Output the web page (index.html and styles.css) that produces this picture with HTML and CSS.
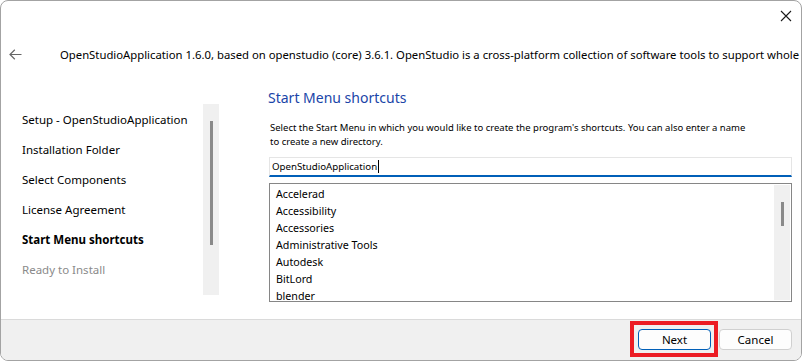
FILE: index.html
```html
<!DOCTYPE html>
<html>
<head>
<meta charset="utf-8">
<link rel="stylesheet" href="styles.css">
</head>
<body>
<div class="window">
  <div class="titlebar">
    <svg class="close" width="12" height="12" viewBox="0 0 12 12"><path d="M1 1 L11 11 M11 1 L1 11" stroke="#1a1a1a" stroke-width="1.1" fill="none"/></svg>
  </div>
  <div class="header">
    <svg class="back" width="13" height="11" viewBox="0 0 13 11"><path d="M12.5 5.5 H1.2 M5.8 0.8 L1 5.5 L5.8 10.2" stroke="#666" stroke-width="1.2" fill="none"/></svg>
    <div class="header-text">OpenStudioApplication 1.6.0, based on openstudio (core) 3.6.1. OpenStudio is a cross-platform collection of software tools to support whole building energy modeling</div>
  </div>
  <div class="main">
    <div class="sidebar">
      <ul class="steps">
        <li>Setup - OpenStudioApplication</li>
        <li>Installation Folder</li>
        <li>Select Components</li>
        <li>License Agreement</li>
        <li class="current">Start Menu shortcuts</li>
        <li class="pending">Ready to Install</li>
      </ul>
      <div class="vscroll side-scroll"><div class="thumb side-thumb"></div></div>
    </div>
    <div class="content">
      <h1 class="title">Start Menu shortcuts</h1>
      <p class="desc">Select the Start Menu in which you would like to create the program's shortcuts. You can also enter a name<br>to create a new directory.</p>
      <div class="input"><span>OpenStudioApplication</span><span class="caret"></span></div>
      <div class="listbox">
        <ul class="items">
          <li>Accelerad</li>
          <li>Accessibility</li>
          <li>Accessories</li>
          <li>Administrative Tools</li>
          <li>Autodesk</li>
          <li>BitLord</li>
          <li>blender</li>
        </ul>
        <div class="vscroll list-scroll"><div class="thumb list-thumb"></div></div>
      </div>
    </div>
  </div>
  <div class="footer">
    <span class="highlight"><button class="btn btn-next">Next</button></span>
    <button class="btn btn-cancel">Cancel</button>
  </div>
</div>
</body>
</html>
```
FILE: styles.css
```css
* { box-sizing: border-box; }
html, body { margin: 0; padding: 0; background: #ffffff; }
body {
  font-family: "Noto Sans", "Open Sans", sans-serif;
  font-size: 11.5px;
  color: #000;
}
.window {
  width: 802px;
  height: 361px;
  border: 1px solid #a3a3a3;
  border-radius: 8px;
  overflow: hidden;
  display: flex;
  flex-direction: column;
  background: #fff;
}
.titlebar {
  height: 29px;
  flex: none;
  display: flex;
  justify-content: flex-end;
  align-items: center;
  padding-right: 9px;
}
.close { display: block; }
.header {
  height: 48px;
  flex: none;
  display: flex;
  align-items: center;
  padding-left: 8px;
  white-space: nowrap;
  overflow: hidden;
  font-size: 11.3px;
}
.back { flex: none; margin-right: 38px; }
.header-text { flex: none; }
.main {
  flex: 1;
  display: flex;
  min-height: 0;
}
.sidebar {
  width: 218px;
  flex: none;
  display: flex;
  padding-top: 26px;
  padding-left: 21px;
}
.steps {
  list-style: none;
  margin: 0;
  padding: 1px 0 0 0;
  flex: 1;
}
.steps li { height: 30px; line-height: 30px; white-space: nowrap; }
.steps li.current { font-weight: bold; }
.steps li.pending { color: #8a8a8a; }
.vscroll {
  flex: none;
  width: 16px;
  background: #f0f0f0;
  display: flex;
  justify-content: center;
}
.side-scroll { height: 191px; }
.thumb { width: 3px; background: #8a8a8a; }
.side-thumb { margin-top: 17px; height: 124px; }
.content {
  flex: 1;
  min-width: 0;
  padding-left: 50px;
  padding-right: 9px;
  display: flex;
  flex-direction: column;
}
.title {
  margin: 10px 0 0 -1px;
  font-size: 14px;
  font-weight: normal;
  color: #1a45a8;
  line-height: 20px;
}
.desc {
  margin: 13px 0 0 1px;
  font-size: 9.5px;
  line-height: 14px;
  white-space: nowrap;
  color: #000;
}
.input {
  margin-top: 8px;
  height: 20px;
  border: 1px solid #e5e5e5;
  border-bottom: 2px solid #005fb8;
  padding-left: 2px;
  display: flex;
  align-items: center;
  font-size: 9.7px;
  line-height: 16px;
}
.caret { width: 1px; height: 13px; background: #000; margin-left: 1px; }
.listbox {
  margin-top: 6px;
  height: 119px;
  border: 1px solid #868686;
  display: flex;
  padding: 1px;
}
.items {
  list-style: none;
  margin: 0;
  padding: 1px 0 0 5px;
  flex: 1;
  font-size: 10.7px;
}
.items li { height: 17px; line-height: 17px; }
.list-scroll { height: 115px; }
.list-thumb { margin-top: 17px; height: 24px; }
.footer {
  height: 41px;
  flex: none;
  border-top: 1px solid #dadada;
  background: #f0f0f0;
  display: flex;
  justify-content: flex-end;
  align-items: flex-start;
  padding: 1px 9px 0 0;
}
.highlight {
  display: flex;
  border: 4px solid #ec1c24;
  padding: 4px 3px 3px 4px;
}
.btn {
  width: 73px;
  height: 21px;
  font-family: inherit;
  font-size: 11.5px;
  background: #fdfdfd;
  border: 1px solid #d0d0d0;
  border-radius: 4px;
  color: #000;
  padding: 0;
}
.btn-next { border-color: #005fb8; }
.btn-cancel { margin-left: 1px; margin-top: 8px; }
```
